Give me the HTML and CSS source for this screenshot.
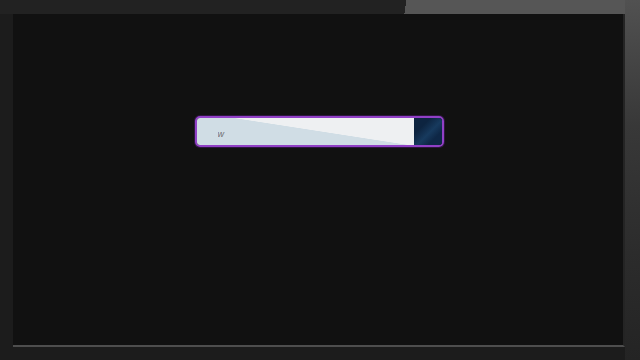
FILE: index.html
```
<!DOCTYPE html>
<html lang="en">
<head>
  <meta charset="UTF-8">
  <title>Search</title>
  <link rel="stylesheet" href="styles.css">
</head>
<body>

  <div class="frame">
    <div class="screen">
      <form class="search" onsubmit="return false">
        <input type="text" class="search-input" placeholder="w">
        <button type="submit" class="search-button" title="Search"></button>
      </form>
    </div>
  </div>

</body>
</html>
```

FILE: styles.css
```
body {
  margin: 0;
  background: #1c1c1c;
  font-family: "Liberation Sans", Arial, sans-serif;
}
.frame {
  height: 360px;
  box-sizing: border-box;
  padding: 14px 15px 13px 13px;
  background:
    linear-gradient(to bottom, #515151, #383838 35%, #2c2c2c 70%, #242424) right top / 15px 100% no-repeat,
    linear-gradient(99deg, #222 63.3%, #565656 63.3%) left top / 100% 14px no-repeat,
    #1c1c1c;
}
.screen {
  height: 100%;
  box-sizing: border-box;
  background: #111;
  border-right: 2px solid #242424;
  border-bottom: 2px solid #4e4e4e;
  display: flex;
  justify-content: center;
  align-items: flex-start;
  padding-top: 102px;
  padding-left: 2px;
}
.search {
  display: flex;
  width: 249px;
  height: 31px;
  box-sizing: border-box;
  border: 2px solid #9140c6;
  border-radius: 5px;
  overflow: hidden;
  box-shadow: 0 0 0 1px #2e1640;
  margin: 0;
}
.search-input {
  flex: 1;
  border: none;
  outline: none;
  padding: 4px 0 0 21px;
  font-size: 9px;
  font-style: italic;
  color: #666;
  background: linear-gradient(188.8deg, #eef0f2 45.5%, #d0dde5 46.5%);
}
.search-input::placeholder {
  color: #707070;
}
.search-button {
  width: 28px;
  border: none;
  padding: 0;
  background: linear-gradient(135deg, #0d2440 30%, #173a5e 55%, #0e2746 75%);
}
```
